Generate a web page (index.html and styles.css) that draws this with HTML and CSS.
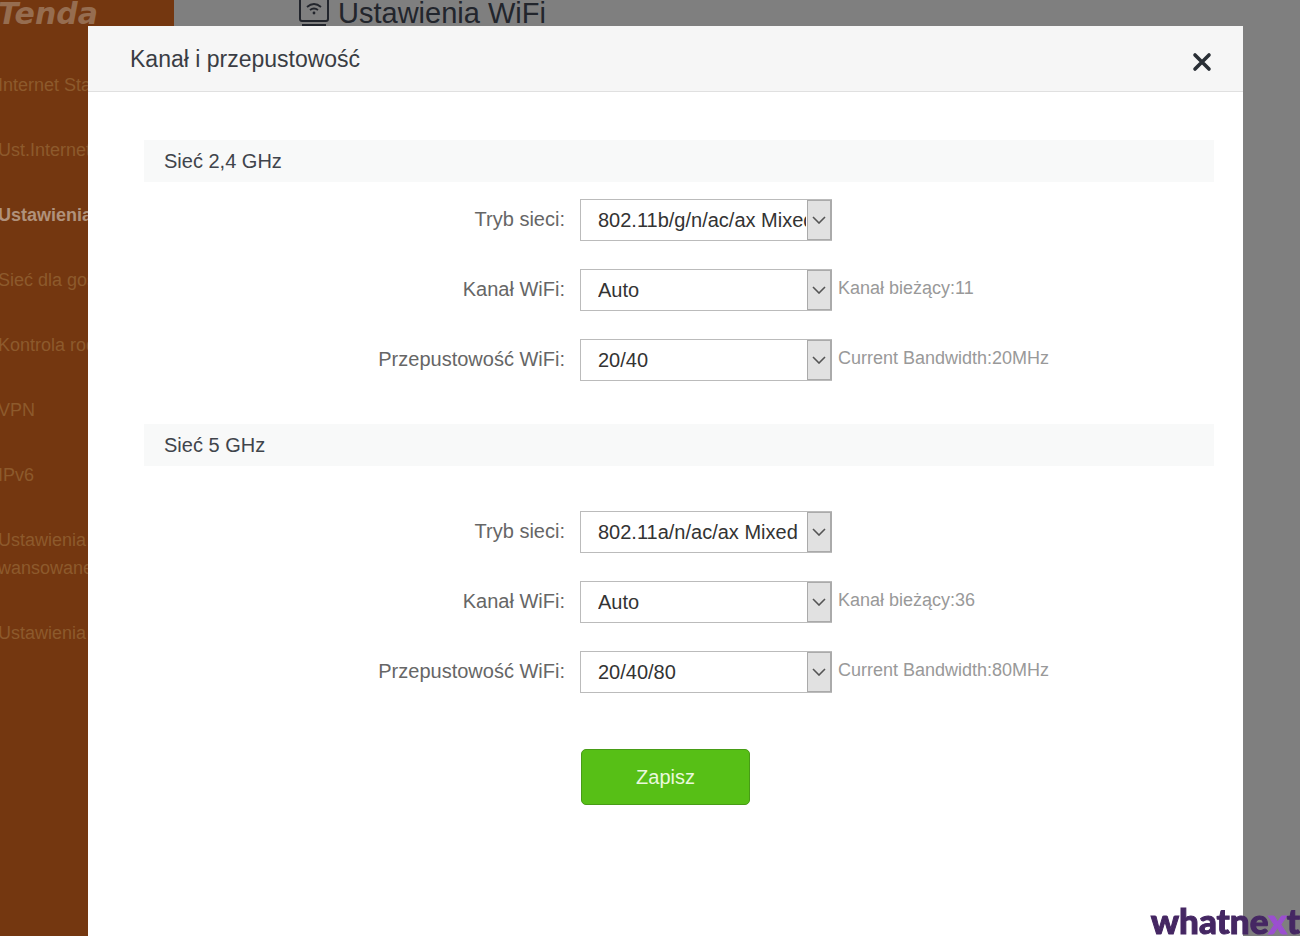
FILE: index.html
```
<!DOCTYPE html>
<html lang="pl">
<head>
<meta charset="utf-8">
<title>Ustawienia WiFi</title>
<link rel="stylesheet" href="styles.css">
</head>
<body>
<div class="page">
  <aside class="sidebar">
    <div class="brand">Tenda</div>
    <nav class="menu">
      <a href="#">Internet Status</a>
      <a href="#">Ust.Internet</a>
      <a href="#" class="active">Ustawienia</a>
      <a href="#">Sieć dla gości</a>
      <a href="#">Kontrola rodz.</a>
      <a href="#">VPN</a>
      <a href="#">IPv6</a>
      <a href="#">Ustawienia<br>wansowane</a>
      <a href="#">Ustawienia</a>
    </nav>
  </aside>
  <main class="content">
    <h1 class="page-title">
      <svg class="wifi-icon" viewBox="0 0 30 27" width="30" height="27" fill="none" stroke="currentColor" stroke-width="2" aria-hidden="true">
        <path d="M1 0v19q0 2 2 2h24q2 0 2-2V0"/>
        <path d="M3 25h24"/>
        <path d="M8 7q7-6 14 0M11 10q4-3 8 0" stroke-width="1.8"/>
        <circle cx="15" cy="13" r="1.4" fill="currentColor" stroke="none"/>
      </svg>
      Ustawienia WiFi
    </h1>
  </main>
</div>

<div class="overlay">
  <section class="dialog" role="dialog" aria-labelledby="dialog-title">
    <header class="dialog-head">
      <h2 id="dialog-title">Kanał i przepustowość</h2>
      <button type="button" class="close" aria-label="Zamknij">
        <svg viewBox="0 0 20 20" width="20" height="20" stroke="currentColor" stroke-width="3.6" stroke-linecap="round" aria-hidden="true"><path d="M3 3L17 17M17 3L3 17"/></svg>
      </button>
    </header>
    <form class="dialog-body">
      <h3>Sieć 2,4 GHz</h3>
      <div class="rows">
        <div class="row">
          <label for="mode24">Tryb sieci:</label>
          <div class="select"><select id="mode24"><option>802.11b/g/n/ac/ax Mixed</option></select><span class="arrow"><svg viewBox="0 0 14 8" width="14" height="8"><path d="M1 1l6 6 6-6"/></svg></span></div>
        </div>
        <div class="row">
          <label for="chan24">Kanał WiFi:</label>
          <div class="select"><select id="chan24"><option>Auto</option></select><span class="arrow"><svg viewBox="0 0 14 8" width="14" height="8"><path d="M1 1l6 6 6-6"/></svg></span></div>
          <span class="note">Kanał bieżący:11</span>
        </div>
        <div class="row">
          <label for="band24">Przepustowość WiFi:</label>
          <div class="select"><select id="band24"><option>20/40</option></select><span class="arrow"><svg viewBox="0 0 14 8" width="14" height="8"><path d="M1 1l6 6 6-6"/></svg></span></div>
          <span class="note">Current Bandwidth:20MHz</span>
        </div>
      </div>
      <h3>Sieć 5 GHz</h3>
      <div class="rows rows-spaced">
        <div class="row">
          <label for="mode5">Tryb sieci:</label>
          <div class="select"><select id="mode5"><option>802.11a/n/ac/ax Mixed</option></select><span class="arrow"><svg viewBox="0 0 14 8" width="14" height="8"><path d="M1 1l6 6 6-6"/></svg></span></div>
        </div>
        <div class="row">
          <label for="chan5">Kanał WiFi:</label>
          <div class="select"><select id="chan5"><option>Auto</option></select><span class="arrow"><svg viewBox="0 0 14 8" width="14" height="8"><path d="M1 1l6 6 6-6"/></svg></span></div>
          <span class="note">Kanał bieżący:36</span>
        </div>
        <div class="row">
          <label for="band5">Przepustowość WiFi:</label>
          <div class="select"><select id="band5"><option>20/40/80</option></select><span class="arrow"><svg viewBox="0 0 14 8" width="14" height="8"><path d="M1 1l6 6 6-6"/></svg></span></div>
          <span class="note">Current Bandwidth:80MHz</span>
        </div>
      </div>
      <div class="actions"><button type="button" class="save">Zapisz</button></div>
    </form>
  </section>
</div>
<div class="watermark">whatne<span>x</span>t</div>
</body>
</html>
```
FILE: styles.css
```
* { box-sizing: border-box; }

body {
  margin: 0;
  overflow: hidden;
  font-family: "Liberation Sans", Arial, sans-serif;
  color: #333;
  background: #7f7f7f;
}

.page { display: flex; min-height: 100vh; }

.sidebar {
  flex: 0 0 174px;
  background: #743710;
  overflow: hidden;
}

.brand {
  height: 27px;
  margin-left: -2px;
  font: italic bold 30px/27px "DejaVu Sans", sans-serif;
  color: #966d50;
}

.menu {
  display: flex;
  flex-direction: column;
  gap: 37px;
  margin: 44px 0 0 -2px;
}

.menu a {
  font-size: 18px;
  line-height: 28px;
  white-space: nowrap;
  color: #8d5a2c;
  text-decoration: none;
}

.menu .active { font-weight: bold; color: #b0917b; }

.content { flex: 1; padding-left: 125px; }

.page-title {
  display: flex;
  align-items: center;
  gap: 9px;
  margin: 0;
  font-size: 29px;
  line-height: 27px;
  font-weight: normal;
  color: #22252c;
}

.overlay {
  position: fixed;
  inset: 0;
  display: flex;
  padding: 26px 57px 0 88px;
}

.dialog { flex: 1; background: #fff; }

.dialog-head {
  display: flex;
  align-items: center;
  justify-content: space-between;
  height: 66px;
  padding: 0 31px 0 42px;
  background: #f6f6f6;
  border-bottom: 1px solid #e0e0e0;
}

.dialog-head h2 {
  margin: 0;
  font-size: 23px;
  line-height: 28px;
  font-weight: normal;
  color: #3a3d44;
}

.close {
  display: flex;
  margin-top: 6px;
  padding: 0;
  border: 0;
  background: none;
  color: #2a2f36;
}

.dialog-body { padding: 48px 29px 0 56px; }

.dialog-body h3 {
  margin: 0;
  padding: 0 20px;
  font-size: 20px;
  line-height: 42px;
  font-weight: normal;
  color: #40444b;
  background: #f8f9f9;
}

.rows {
  display: flex;
  flex-direction: column;
  gap: 28px;
  padding: 17px 0 43px;
}

.rows-spaced { padding: 45px 0 56px; }

.row {
  display: grid;
  grid-template-columns: 421px 252px 1fr;
  align-items: center;
}

.row label {
  padding: 0 0 2px;
  font-size: 20px;
  text-align: right;
  color: #666;
}

.select { position: relative; margin-left: 15px; width: 252px; }

.select select {
  display: block;
  appearance: none;
  width: 100%;
  height: 42px;
  padding: 0 25px 0 17px;
  border: 1px solid #bbb;
  border-radius: 0;
  background: #fff;
  font: 20px "Liberation Sans", Arial, sans-serif;
  color: #333;
}

.arrow {
  position: absolute;
  top: 1px;
  right: 0;
  bottom: 1px;
  display: flex;
  align-items: center;
  justify-content: center;
  width: 25px;
  border: 1px solid #aaa;
  border-right-width: 2px;
  background: #e1e1e1;
  pointer-events: none;
}

.arrow path { fill: none; stroke: #555; stroke-width: 1.6; }

.note {
  padding: 0 0 4px 21px;
  font-size: 18px;
  color: #999;
}

.actions { padding-left: 437px; }

.save {
  width: 169px;
  height: 56px;
  border: 1px solid #489c16;
  border-radius: 5px;
  background: #57bf16;
  font: 20px "Liberation Sans", Arial, sans-serif;
  color: #e9f9dc;
}

.watermark {
  position: fixed;
  right: 0;
  bottom: 0;
  font: 900 35px/32px Lato, sans-serif;
  color: #452763;
  -webkit-text-stroke: 1px currentColor;
}

.watermark span { color: #9b4fd0; }
```
